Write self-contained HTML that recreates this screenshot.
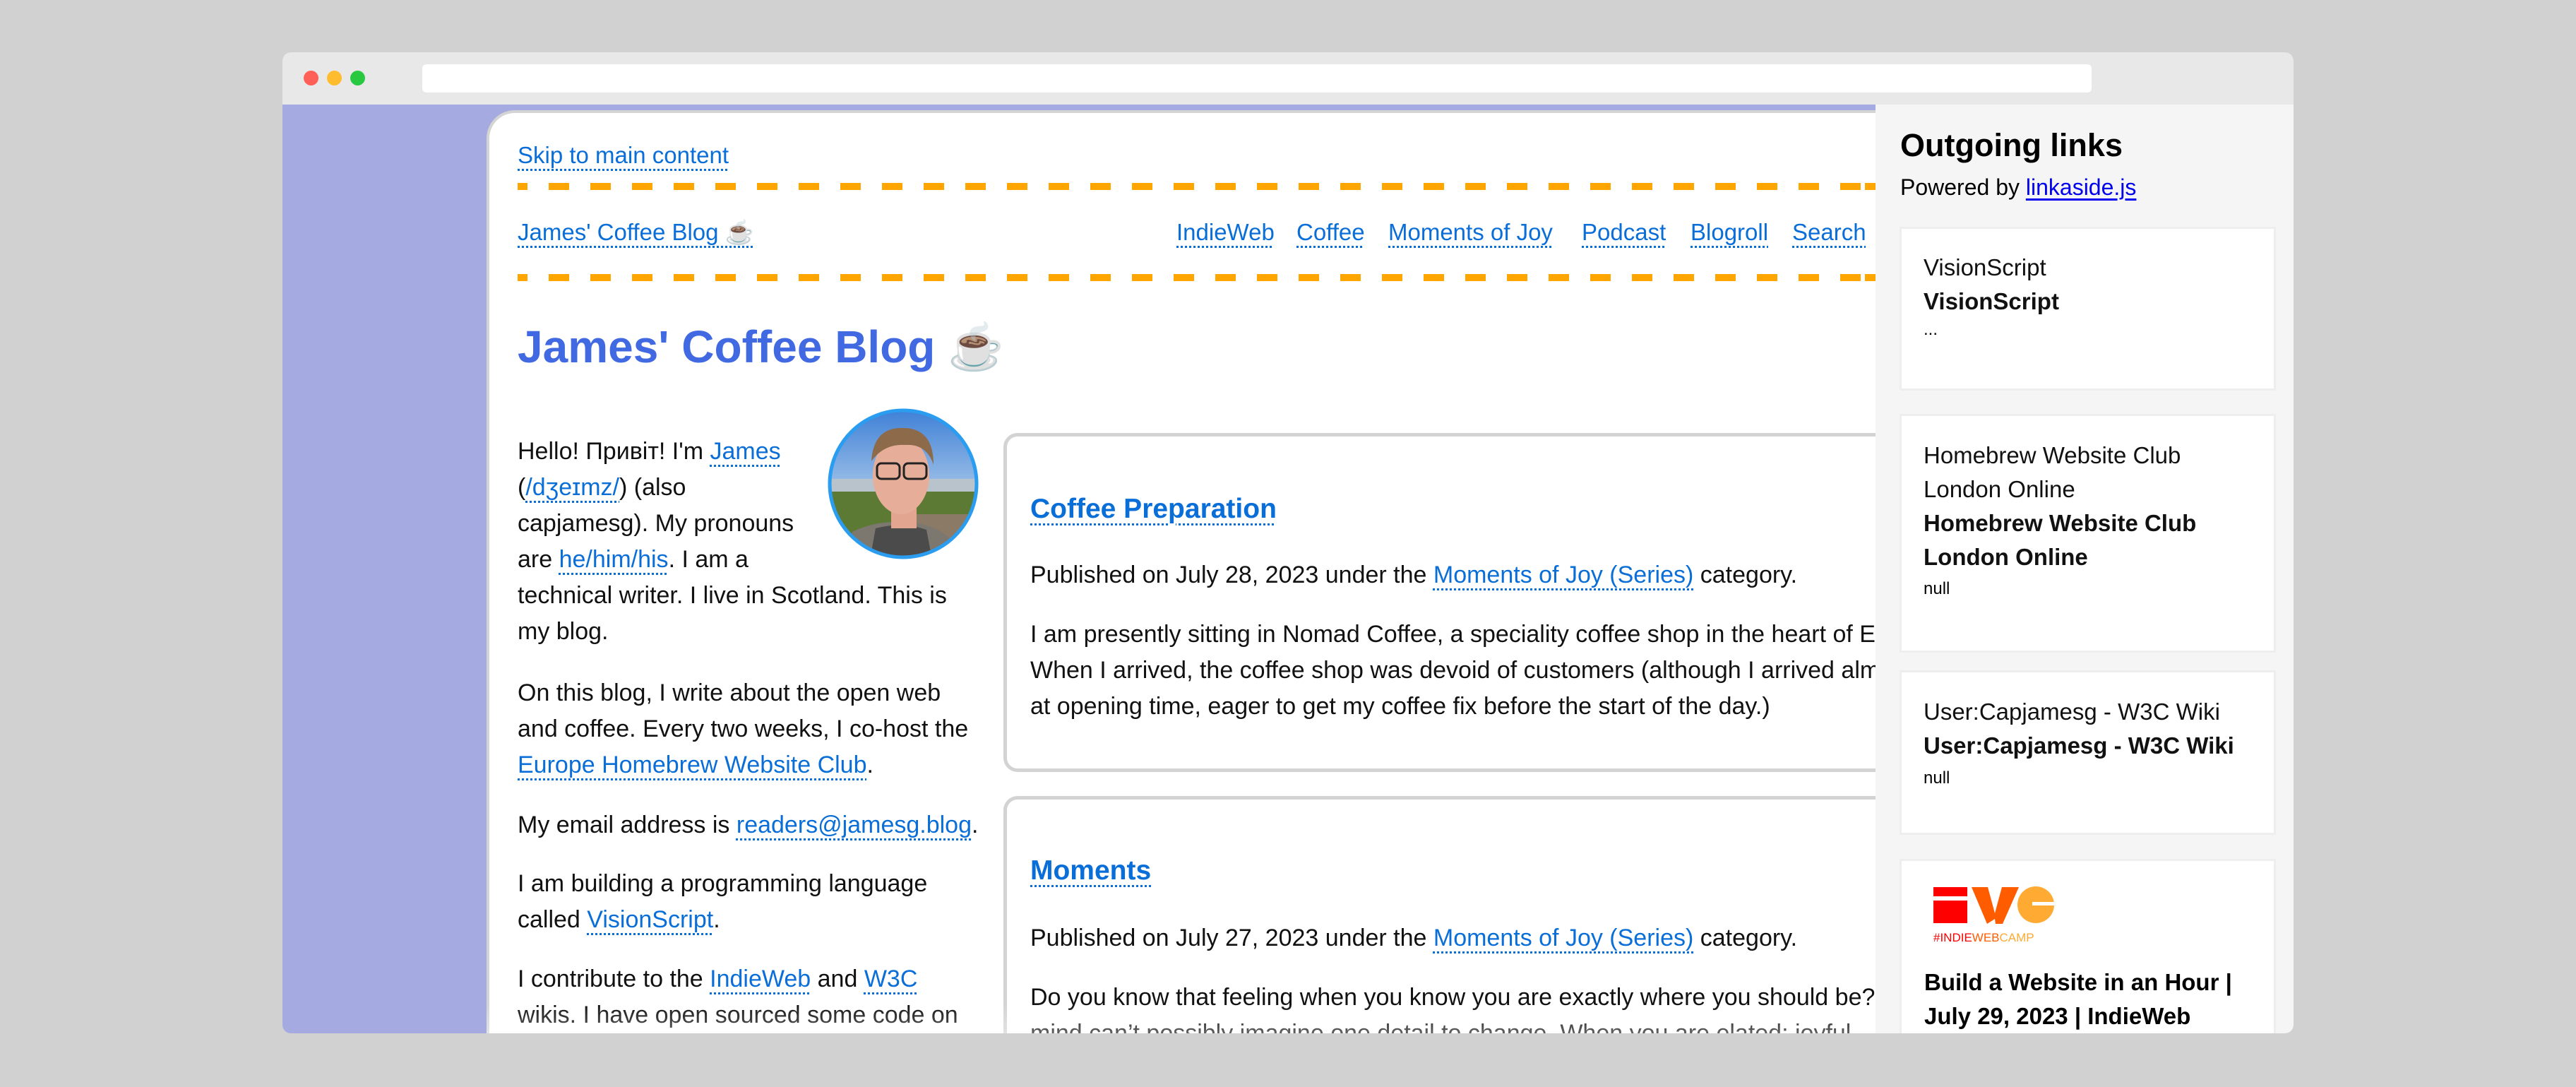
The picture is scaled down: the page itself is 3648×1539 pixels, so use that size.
<!DOCTYPE html>
<html><head><meta charset="utf-8">
<style>
*{margin:0;padding:0;box-sizing:border-box}
html,body{width:3648px;height:1539px;overflow:hidden;background:#d1d1d1;font-family:"Liberation Sans",Arial,sans-serif}
#win{position:absolute;left:400px;top:74px;width:2848px;height:1389px;overflow:hidden;border-radius:12px;background:#a5abe0}
#in{position:absolute;left:-400px;top:-74px;width:3648px;height:1537px}
.a{position:absolute;white-space:nowrap}
a,.l{color:#0a6ed8;text-decoration:underline dotted;text-decoration-thickness:3px;text-underline-offset:8px}
.t{font-size:34px;line-height:51px;color:#111}
.sb{font-size:33px;line-height:48px;color:#111}
.sb b{font-weight:bold}
.card{position:absolute;background:#fff;border:3px solid #eee}
.dash{position:absolute;left:733px;width:1923px;height:10px;background:repeating-linear-gradient(to right,#ffa500 0 29px,transparent 29px 59px);background-position:-15px 0}
</style></head><body>
<div id="win"><div id="in">
<div class="a" style="left:400px;top:74px;width:2848px;height:74px;background:#e8e8e8"></div>
<div class="a" style="left:430px;top:100px;width:21px;height:21px;border-radius:50%;background:#fe5f57"></div>
<div class="a" style="left:463px;top:100px;width:21px;height:21px;border-radius:50%;background:#febc2e"></div>
<div class="a" style="left:496px;top:100px;width:21px;height:21px;border-radius:50%;background:#28c840"></div>
<div class="a" style="left:598px;top:91px;width:2364px;height:40px;border-radius:6px;background:#fff"></div>
<div class="a" style="left:689px;top:156px;width:1967px;height:1381px;background:#fff;border-left:4px solid #d4d4d4;border-top:4px solid #d4d4d4;border-top-left-radius:40px"></div>
<div class="a t" style="left:733px;top:194px;font-size:33px"><a>Skip to main content</a></div>
<div class="dash" style="top:259px"></div>
<div class="a t" style="left:733px;top:303px;font-size:33px"><a>James' Coffee Blog ☕</a></div>
<div class="a t" style="left:1666px;top:303px;font-size:33px"><a>IndieWeb</a></div>
<div class="a t" style="left:1836px;top:303px;font-size:33px"><a>Coffee</a></div>
<div class="a t" style="left:1966px;top:303px;font-size:33px"><a>Moments of Joy</a></div>
<div class="a t" style="left:2240px;top:303px;font-size:33px"><a>Podcast</a></div>
<div class="a t" style="left:2394px;top:303px;font-size:33px"><a>Blogroll</a></div>
<div class="a t" style="left:2538px;top:303px;font-size:33px"><a>Search</a></div>
<div class="dash" style="top:388px"></div>
<div class="a" style="left:733px;top:451px;font-size:64px;line-height:80px;font-weight:bold;color:#4169e1">James' Coffee Blog ☕</div>
<svg class="a" style="left:1172px;top:578px" width="214" height="214" viewBox="0 0 214 214">
<defs><clipPath id="c"><circle cx="107" cy="107" r="103"/></clipPath>
<linearGradient id="sky" x1="0" y1="0" x2="0" y2="1"><stop offset="0" stop-color="#3d7fd6"/><stop offset="0.6" stop-color="#a9c8ea"/></linearGradient></defs>
<g clip-path="url(#c)">
<rect width="214" height="214" fill="url(#sky)"/>
<rect x="0" y="100" width="214" height="30" fill="#b9c3cc"/>
<rect x="0" y="118" width="214" height="60" fill="#5d7a35"/>
<rect x="120" y="150" width="94" height="50" fill="#8a7a66"/>
<path d="M20 214 L35 175 Q70 158 107 162 Q150 160 180 190 L190 214Z" fill="#7c776f"/>
<path d="M60 214 L68 170 Q107 160 140 172 L148 214Z" fill="#4b4b4b"/>
<rect x="90" y="130" width="36" height="40" fill="#e2a690"/>
<ellipse cx="104" cy="95" rx="40" ry="55" fill="#e6ae98"/>
<path d="M62 75 Q65 25 110 28 Q150 30 150 80 Q140 50 110 52 Q80 50 62 75Z" fill="#8d6a4a"/>
<rect x="70" y="78" width="32" height="22" rx="6" fill="none" stroke="#222" stroke-width="3"/>
<rect x="108" y="78" width="32" height="22" rx="6" fill="none" stroke="#222" stroke-width="3"/>
</g>
<circle cx="107" cy="107" r="104" fill="none" stroke="#2a9df0" stroke-width="5"/>
</svg>
<div class="a t" style="left:733px;top:614px">Hello! Привіт! I'm <a>James</a><br>(<a>/dʒeɪmz/</a>) (also<br>capjamesg). My pronouns<br>are <a>he/him/his</a>. I am a<br>technical writer. I live in Scotland. This is<br>my blog.</div>
<div class="a t" style="left:733px;top:956px">On this blog, I write about the open web<br>and coffee. Every two weeks, I co-host the<br><a>Europe Homebrew Website Club</a>.</div>
<div class="a t" style="left:733px;top:1143px">My email address is <a>readers@jamesg.blog</a>.</div>
<div class="a t" style="left:733px;top:1226px">I am building a programming language<br>called <a>VisionScript</a>.</div>
<div class="a t" style="left:733px;top:1361px">I contribute to the <a>IndieWeb</a> and <a>W3C</a><br>wikis. I have open sourced some code on</div>
<div class="a" style="left:1421px;top:613px;width:1300px;height:480px;border:5px solid #d3d3d3;border-radius:20px;background:#fff"></div>
<div class="a t" style="left:1459px;top:695px;font-size:39px;font-weight:bold"><a>Coffee Preparation</a></div>
<div class="a t" style="left:1459px;top:789px">Published on July 28, 2023 under the <a>Moments of Joy (Series)</a> category.</div>
<div class="a t" style="left:1459px;top:873px;width:1197px;overflow:hidden">I am presently sitting in Nomad Coffee, a speciality coffee shop in the heart of Edinburgh.<br>When I arrived, the coffee shop was devoid of customers (although I arrived almost<br>at opening time, eager to get my coffee fix before the start of the day.)</div>
<div class="a" style="left:1421px;top:1127px;width:1300px;height:410px;border:5px solid #d3d3d3;border-bottom:none;border-radius:20px 20px 0 0;background:#fff"></div>
<div class="a t" style="left:1459px;top:1207px;font-size:39px;font-weight:bold"><a>Moments</a></div>
<div class="a t" style="left:1459px;top:1303px">Published on July 27, 2023 under the <a>Moments of Joy (Series)</a> category.</div>
<div class="a t" style="left:1459px;top:1387px;width:1197px;height:102px;overflow:hidden">Do you know that feeling when you know you are exactly where you should be? Your<br>mind can’t possibly imagine one detail to change. When you are elated; joyful</div>
<div class="a" style="left:689px;top:1420px;width:1967px;height:45px;background:linear-gradient(rgba(255,255,255,0),rgba(255,255,255,0.35))"></div>
<div class="a" style="left:2656px;top:148px;width:592px;height:1389px;background:#f5f5f5"></div>
<div class="a" style="left:2691px;top:178px;font-size:45px;line-height:56px;font-weight:bold;color:#000">Outgoing links</div>
<div class="a" style="left:2691px;top:245px;font-size:32px;line-height:40px;color:#000">Powered by <span style="color:#0000ee;text-decoration:underline;text-underline-offset:5px">linkaside.js</span></div>
<div class="card" style="left:2690px;top:321px;width:533px;height:232px"></div>
<div class="a sb" style="left:2724px;top:355px">VisionScript<br><b>VisionScript</b></div>
<div class="a" style="left:2724px;top:449px;font-size:24px;line-height:36px">...</div>
<div class="card" style="left:2690px;top:586px;width:533px;height:338px"></div>
<div class="a sb" style="left:2724px;top:621px">Homebrew Website Club<br>London Online<br><b>Homebrew Website Club<br>London Online</b></div>
<div class="a" style="left:2724px;top:816px;font-size:24px;line-height:36px">null</div>
<div class="card" style="left:2690px;top:949px;width:533px;height:233px"></div>
<div class="a sb" style="left:2724px;top:984px">User:Capjamesg - W3C Wiki<br><b>User:Capjamesg - W3C Wiki</b></div>
<div class="a" style="left:2724px;top:1084px;font-size:24px;line-height:36px">null</div>
<div class="card" style="left:2690px;top:1216px;width:533px;height:320px;border-bottom:none"></div>
<svg class="a" style="left:2738px;top:1253px" width="172" height="84" viewBox="0 0 172 84">
<rect x="0" y="3" width="48" height="13" fill="#ff0000"/>
<rect x="0" y="22" width="48" height="32" fill="#ff0000"/>
<polygon points="54,3 77,3 87,40 97,3 121,3 98,55 88,55 87,48 76,55" fill="#ff5c00"/>
<circle cx="145" cy="28" r="26" fill="#ffaa33"/>
<rect x="140" y="24" width="32" height="5" fill="#fff"/>
<text x="0" y="80" font-family="Liberation Sans,sans-serif" font-size="17" fill="#ff0000">#INDIE<tspan fill="#ff5c00">WEB</tspan><tspan fill="#ffaa33">CAMP</tspan></text>
</svg>
<div class="a sb" style="left:2725px;top:1367px;font-weight:bold;color:#000;height:100px;overflow:hidden">Build a Website in an Hour |<br>July 29, 2023 | IndieWeb</div>
</div></div>
</body></html>
